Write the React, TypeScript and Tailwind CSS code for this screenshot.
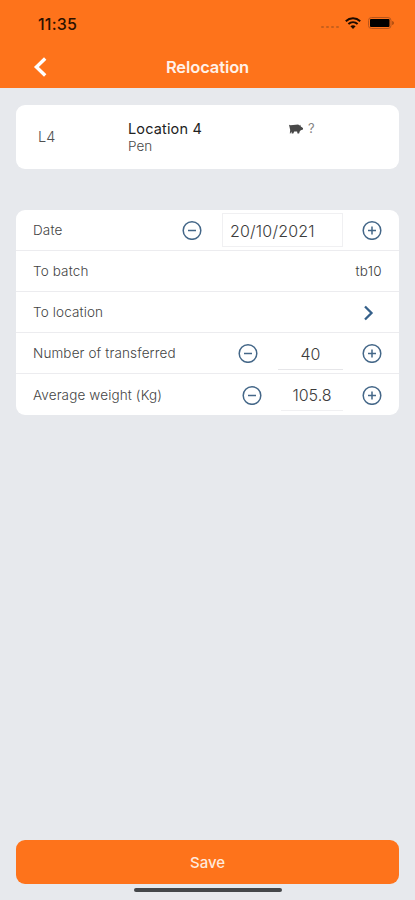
import type { ReactNode } from "react";

function StatusBar() {
  return (
    <div className="flex h-[46px] items-center justify-between pl-[38px] pr-[20px] text-[#2d1200]">
      <span className="pt-[2px] text-[16px] font-medium leading-none tracking-[0.2px]">
        11:35
      </span>
      <div className="flex items-center">
        <div className="mr-[6px] mt-[8px] flex gap-[2px]">
          <span className="h-[2px] w-[3px] rounded-full bg-[#c75f1c]" />
          <span className="h-[2px] w-[3px] rounded-full bg-[#c75f1c]" />
          <span className="h-[2px] w-[3px] rounded-full bg-[#c75f1c]" />
          <span className="h-[2px] w-[3px] rounded-full bg-[#c75f1c]" />
        </div>
        <svg width="16" height="12" viewBox="0 0 16 12" fill="none">
          <path
            d="M.8 4.200C4.900.4 11.100.4 15.200 4.200M3.400 7c2.700-2.400 6.500-2.400 9.200 0"
            stroke="#1c0b00"
            strokeWidth="2"
          />
          <path d="M5.400 9.200c1.600-1.300 3.600-1.300 5.200 0L8 12z" fill="#1c0b00" />
        </svg>
        <svg
          className="ml-[7px]"
          width="27"
          height="12"
          viewBox="0 0 27 12"
          fill="none"
        >
          <rect
            x=".5"
            y=".5"
            width="22.5"
            height="11"
            rx="3"
            stroke="#b8551a"
          />
          <rect x="2" y="2" width="19.5" height="8" rx="1" fill="#000" />
          <path d="M24.200 4v4c1-.3 1.700-1.100 1.700-2s-.7-1.700-1.700-2z" fill="#a84a0e" />
        </svg>
      </div>
    </div>
  );
}

function StepButton({ type }: { type: "plus" | "minus" }) {
  return (
    <button
      type="button"
      aria-label={type === "plus" ? "Increase" : "Decrease"}
      className="shrink-0"
    >
      <svg
        width="20"
        height="20"
        viewBox="0 0 20 20"
        fill="none"
        stroke="#446788"
        strokeWidth="1.5"
      >
        <circle cx="10" cy="10.500" r="8.800" />
        <path d={type === "plus" ? "M6 10.500h8M10 6.500v8" : "M6 10.500h8"} />
      </svg>
    </button>
  );
}

function Row({ label, children }: { label: string; children: ReactNode }) {
  return (
    <div className="flex h-[41px] items-center justify-between border-b border-[#ececef] px-[17px] last:border-b-0">
      <span className="pt-[2px] text-[13.500px] font-light leading-none tracking-[0.13px] text-[#444]">
        {label}
      </span>
      <div className="flex items-center">{children}</div>
    </div>
  );
}

export default function App() {
  return (
    <div className="flex h-[900px] w-full flex-col bg-[#e7e9ed] font-['Inter','Liberation_Sans',sans-serif]">
      <header className="h-[88px] shrink-0 bg-[#fe731b]">
        <StatusBar />
        <div className="grid h-[42px] grid-cols-[80px_1fr_80px] items-center">
          <button type="button" aria-label="Back" className="pl-[33px]">
            <svg
              width="14"
              height="20"
              viewBox="0 0 14 20"
              fill="none"
              stroke="#fff"
              strokeWidth="3.400"
            >
              <path d="M12.200 1.500 3.400 10l8.800 8.500" />
            </svg>
          </button>
          <h1 className="text-center text-[16.500px] font-semibold leading-none tracking-[-0.1px] text-[#fff1e8]">
            Relocation
          </h1>
        </div>
      </header>

      <main className="flex flex-1 flex-col px-4 pt-[17px]">
        <section className="flex h-[64px] rounded-[9px] bg-white">
          <span className="w-[112px] self-center pl-[22px] text-[14.500px] font-light text-[#505050]">
            L4
          </span>
          <div className="w-[161px] pt-[15px]">
            <div className="text-[14.500px] leading-[17px] tracking-[0.15px] text-[#222]">
              Location 4
            </div>
            <div className="text-[13.500px] font-light leading-[18px] text-[#484848]">
              Pen
            </div>
          </div>
          <div className="flex h-[17px] items-center gap-[5px] pt-[15px] box-content">
            <svg width="14" height="10" viewBox="0 0 14 10" fill="#484848">
              <path d="M0 .8l1.500.4L9.200.6l1.200 1 .9-.8.500 1.700L14 4v1.500l-2.200.7-1.100 1.200-.6 2.200H8.500l-.4-2H5.200l-.9 2H2.700l-.3-2-1 2H.8L1.200 6z" />
            </svg>
            <span className="text-[13px] leading-none text-[#858585]">?</span>
          </div>
        </section>

        <section className="mt-[41px] rounded-[9px] bg-white">
          <Row label="Date">
            <StepButton type="minus" />
            <div className="ml-[20px] mr-[19px] flex h-[34px] w-[121px] items-center border border-[#f0f0f2] pl-[7px] pt-px text-[16px] font-light tracking-[0.2px] text-[#3c3c3c]">
              20/10/2021
            </div>
            <StepButton type="plus" />
          </Row>
          <Row label="To batch">
            <span className="pt-px text-[13.500px] font-light tracking-[0.3px] text-[#404040]">
              tb10
            </span>
          </Row>
          <Row label="To location">
            <svg
              className="mr-[8px] mt-px"
              width="11"
              height="16"
              viewBox="0 0 11 16"
              fill="none"
              stroke="#35608a"
              strokeWidth="2.300"
            >
              <path d="M2 1.500 8.500 8 2 14.500" />
            </svg>
          </Row>
          <Row label="Number of transferred">
            <StepButton type="minus" />
            <div className="ml-[20px] mr-[19px] flex h-[33px] w-[65px] items-center justify-center border-b border-[#e6e6e9] pt-[2px] text-[16px] font-light text-[#3c3c3c]">
              40
            </div>
            <StepButton type="plus" />
          </Row>
          <Row label="Average weight (Kg)">
            <StepButton type="minus" />
            <div className="ml-[19px] mr-[19px] flex h-[33px] w-[62px] items-center justify-center border-b border-[#f0f0f2] pt-[2px] text-[16px] font-light text-[#3c3c3c]">
              105.8
            </div>
            <StepButton type="plus" />
          </Row>
        </section>
      </main>

      <footer className="flex h-[60px] shrink-0 flex-col items-center px-4">
        <button
          type="button"
          className="h-[44px] w-full rounded-[9px] bg-[#fe731b] pt-[2px] text-[15px] font-medium text-[#ffeadd]"
        >
          Save
        </button>
        <div className="mt-[4px] h-[4px] w-[148px] rounded-full bg-[#45474a]" />
      </footer>
    </div>
  );
}
